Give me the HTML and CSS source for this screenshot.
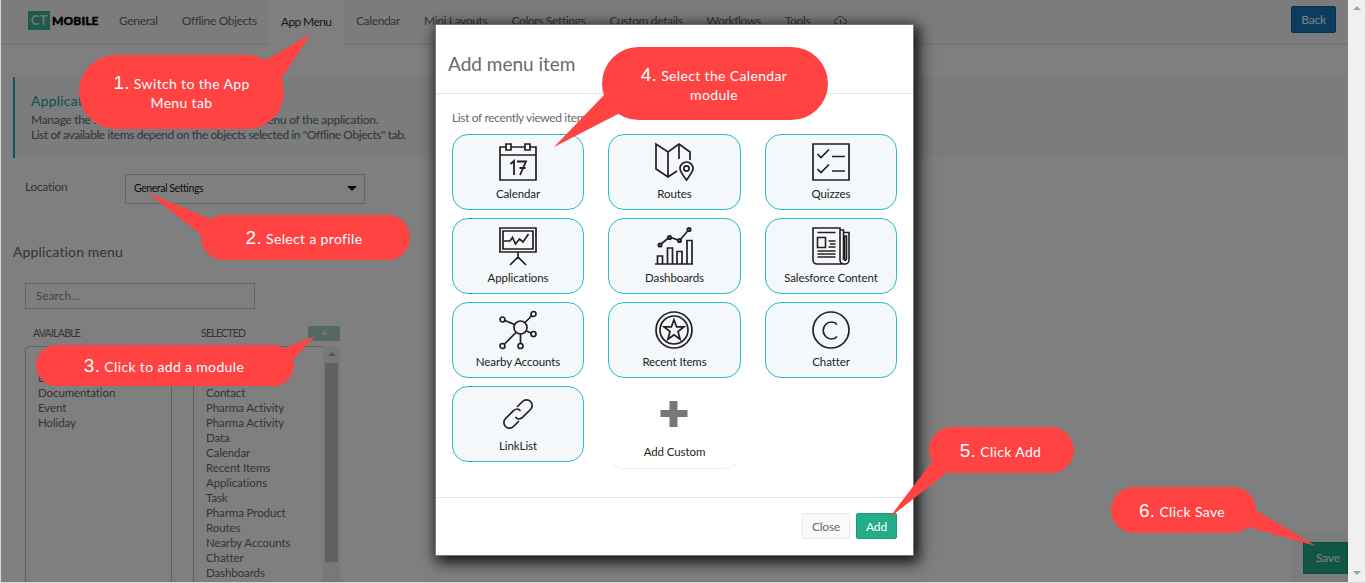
FILE: index.html
```html
<!DOCTYPE html>
<html lang="en">
<head>
<meta charset="utf-8">
<title>CT Mobile - App Menu</title>
<link rel="stylesheet" href="styles.css">
</head>
<body>
<div class="window">
  <div class="page">
    <header class="topbar">
      <div class="logo"><span class="logo-mark">CT</span><span class="logo-name">MOBILE</span></div>
      <nav class="tabs">
        <span class="tab">General</span>
        <span class="tab">Offline Objects</span>
        <span class="tab active">App Menu</span>
        <span class="tab">Calendar</span>
        <span class="tab">Mini Layouts</span>
        <span class="tab">Colors Settings</span>
        <span class="tab">Custom details</span>
        <span class="tab">Workflows</span>
        <span class="tab">Tools</span>
        <span class="tab"><svg width="13" height="12" viewBox="0 0 13 12" fill="none" stroke="currentColor"><path d="M4 9H3a2.500 2.500 0 0 1-.2-5A3.800 3.800 0 0 1 10 4a2.500 2.500 0 0 1 0 5H9M6.500 5v6M4.500 9l2 2 2-2"/></svg></span>
      </nav>
      <span class="back">Back</span>
    </header>
    <section class="notice">
      <h2>Application menu</h2>
      <p class="wide">Manage the set of available items in the main menu of the application.</p>
      <p>List of available items depend on the objects selected in "Offline Objects" tab.</p>
    </section>
    <div class="location">
      <span class="location-label">Location</span>
      <div class="select"><span>General Settings</span><i class="caret"></i></div>
    </div>
    <h3 class="section-title">Application menu</h3>
    <div class="search">Search...</div>
    <div class="lists-head"><span class="col-a">AVAILABLE</span><span class="col-b">SELECTED</span><span class="plus">+</span></div>
    <div class="lists">
      <ul class="list available"><li>Account</li><li>Data</li><li>Documentation</li><li>Event</li><li>Holiday</li></ul>
      <ul class="list selected"><li>Home</li><li>Account</li><li>Contact</li><li>Pharma Activity</li><li>Pharma Activity</li><li>Data</li><li>Calendar</li><li>Recent Items</li><li>Applications</li><li>Task</li><li>Pharma Product</li><li>Routes</li><li>Nearby Accounts</li><li>Chatter</li><li>Dashboards</li></ul>
      <div class="list-scroll"><i class="up"></i><b class="thumb"></b></div>
    </div>
    <div class="savebar"><span class="save">Save</span></div>
    <div class="shade"></div>
  </div>
  <div class="scrollbar"><i class="up"></i><i class="down"></i></div>
</div>

<div class="modal">
  <div class="modal-head">Add menu item</div>
  <div class="modal-body">
    <p class="hint">List of recently viewed items</p>
    <div class="tiles">
      <div class="tile"><svg viewBox="0 0 38 38"><path d="M7 4H1v33h36V4h-6M12 4h14M1 12h36M7 1h5v6H7zM26 1h5v6h-5z"/><path d="M11.500 21l3.500-3v14M18 18.500h9L21 32M20.500 25h6" stroke-width="1.800"/></svg><span>Calendar</span></div>
      <div class="tile"><svg viewBox="0 0 38 38"><path d="M22 28l-9 6L1 26V1l12 8L24 1l11 8v8M13 9v25M24 1v15"/><path d="M31.500 37c-3-4.500-6.500-8-6.500-11.500a6.500 6.500 0 0 1 13 0C38 29 34.500 32.500 31.500 37z"/><circle cx="31.500" cy="25.500" r="2.600"/></svg><span>Routes</span></div>
      <div class="tile"><svg viewBox="0 0 38 38"><path d="M1 1h36v36H1zM5.500 11l3.500 3.500L17 6.500M20 13.500h13M5.500 26l3.500 3.500L17 21.500M20 28h13"/></svg><span>Quizzes</span></div>
      <div class="tile"><svg viewBox="0 0 38 38"><path d="M1 1h36v24H1zM4 4h30v18H4zM5 14h6l2.500-3.500 3 6.500 4-5 3.500 3 5.500-8M19 25v5M11 38l8-8 8 8"/></svg><span>Applications</span></div>
      <div class="tile"><svg viewBox="0 0 38 38"><path d="M0 37h38M2.500 37v-8h5v8M12.500 37V21h5v16M22 37V24.500h5V37M32 37V13.500h5V37M5 18l9.500-8L24.500 13.500l9.500-11"/><g fill="#777"><circle cx="5" cy="18" r="1.700"/><circle cx="14.500" cy="10.500" r="1.700"/><circle cx="24.500" cy="13.500" r="1.700"/><circle cx="34" cy="2.500" r="1.700"/></g></svg><span>Dashboards</span></div>
      <div class="tile"><svg viewBox="0 0 38 38"><path d="M5 37a4 4 0 0 1-4-4V1h27v32a4 4 0 0 0 4 4H5M28 3h3.500v30M28 37h5a4 4 0 0 0 4-4V5.500h-5.500M32.500 9v23q.5 3 2 0V9zM5.500 10.500h8v10h-8zM5.500 5.500h18M16.500 14h7M18 17h5.500M16.500 20h7M5.500 24h18M5.500 27h18M5.500 30h18" stroke-width="1.600"/></svg><span>Salesforce Content</span></div>
      <div class="tile"><svg viewBox="0 0 38 38"><circle cx="21.500" cy="16.500" r="6.500"/><circle cx="3.500" cy="8.500" r="2.500"/><circle cx="34.500" cy="3" r="2.500"/><circle cx="34.500" cy="23" r="2.500"/><circle cx="21.500" cy="35" r="2.500"/><circle cx="3.500" cy="35" r="2.500"/><path d="M6 9.500l9.500 4M32.500 5L26 11.500M32 22l-4.500-2M21.500 23v9.500M5.500 33L17 21.500"/></svg><span>Nearby Accounts</span></div>
      <div class="tile"><svg viewBox="0 0 38 38"><circle cx="19" cy="19" r="18"/><circle cx="19" cy="19" r="14"/><path d="M19 8.800l2.600 7.100h7.300L23 20.500l2.100 7.800-6.100-4.500-6.100 4.500L15 20.500l-5.900-4.600h7.300z"/></svg><span>Recent Items</span></div>
      <div class="tile"><svg viewBox="0 0 38 38"><circle cx="19" cy="19" r="18"/><path d="M25 13.500Q23 11 19.500 11a8.300 8.500 0 0 0 0 17Q23 28 25 25.500"/></svg><span>Chatter</span></div>
      <div class="tile"><svg viewBox="0 0 38 38"><path d="M18 12l5.500-5.500a5.400 5.400 0 0 1 8 8L23.500 22.300q-4 3.500-7-.3M20 26l-5.500 5.500a5.400 5.400 0 0 1-8-8l8-7.800q4-3.500 7 .3"/></svg><span>LinkList</span></div>
      <div class="tile custom"><svg viewBox="0 0 38 38"><path d="M14.500 6h8v9h10v7h-10v10h-8V22h-9v-7h9z"/></svg><span>Add Custom</span></div>
    </div>
  </div>
  <div class="modal-foot"><span class="btn">Close</span><span class="btn add">Add</span></div>
</div>

<svg class="tails" viewBox="0 0 1366 583"><path d="M262 62L311 34 279 82zM213 220L148 193 203 236zM280 350L315 336 289 364zM606 93L554 147 622 112zM934 459L889 518 950 470zM1250 507L1316 546 1244 526z"/></svg>
<div class="callout c1"><p><b>1.</b> Switch to the App</p><p>Menu tab</p></div>
<div class="callout c2"><p><b>2.</b> Select a profile</p></div>
<div class="callout c3"><p><b>3.</b> Click to add a module</p></div>
<div class="callout c4"><p><b>4.</b> Select the Calendar</p><p>module</p></div>
<div class="callout c5"><p><b>5.</b> Click Add</p></div>
<div class="callout c6"><p><b>6.</b> Click Save</p></div>
</body>
</html>
```
FILE: styles.css
```css
* { box-sizing: border-box; }
body { margin: 0; width: 1366px; height: 583px; overflow: hidden; position: relative; font: 12px/15px Lato, sans-serif; color: #676a6c; background: #d8d8d8; }
h2, h3, p, ul { margin: 0; padding: 0; font-weight: 400; list-style: none; }
.window { display: flex; height: 582px; padding: 0 1px; }
.page { position: relative; flex: 1; overflow: hidden; background: #fff; }
.shade { position: absolute; inset: 0; background: rgba(0, 0, 0, .5); }
.scrollbar { position: relative; width: 17px; background: #f0f0f0; }
.up, .down { position: absolute; left: 5px; border: solid transparent; border-width: 0 4px 4px; border-bottom-color: #a3a3a3; top: 6px; }
.down { top: auto; bottom: 7px; border-width: 4px 4px 0; border-top-color: #a3a3a3; }
.topbar { display: flex; height: 45px; background: #f8f8f8; border-bottom: 1px solid #e2e2e2; padding-left: 27px; }
.logo { display: flex; height: 19px; margin-top: 11px; width: 79px; line-height: 19px; }
.logo-mark { width: 22px; background: #41b39d; color: #d9e8e5; font-weight: 700; font-size: 13px; text-align: center; }
.logo-name { margin-left: 2px; color: #000; font-weight: 900; font-size: 12px; letter-spacing: .1px; -webkit-text-stroke: .4px #000; }
.tabs { display: flex; height: 45px; line-height: 42px; letter-spacing: -.35px; }
.tab { padding: 0 12px; white-space: nowrap; }
.tab svg { vertical-align: -2px; }
.tab.active { width: 75px; background: #fff; color: #333; line-height: 44px; letter-spacing: -.6px; }
.back { margin: 6px 12px 0 auto; width: 45px; height: 27px; background: #1a7bbd; border: 1px solid #0e629c; border-radius: 2px; color: #fff; text-align: center; line-height: 26px; letter-spacing: -.2px; }
.notice { margin: 32px 0 0 12px; height: 81px; padding: 15px 0 0 16px; background: #f4f8fa; border-left: 2px solid #20aebb; letter-spacing: -.41px; }
.notice .wide { letter-spacing: -.28px; }
.notice h2 { font-size: 14px; line-height: 18px; color: #20a3af; margin-bottom: 2px; letter-spacing: .2px; }
.location { display: flex; margin: 16px 0 0 24px; height: 30px; line-height: 25px; }
.location-label { width: 100px; letter-spacing: -.3px; }
.select { display: flex; align-items: center; justify-content: space-between; width: 240px; padding: 0 7px 2px 8px; border: 1px solid #c5ccd2; color: #222; font-size: 10.500px; letter-spacing: -.42px; }
.caret { border: 5px solid transparent; border-top-color: #111; border-bottom: 0; }
.section-title { margin: 38px 0 0 12px; font-size: 14px; line-height: 20px; letter-spacing: .15px; }
.search { margin: 21px 0 0 24px; width: 230px; height: 26px; border: 1px solid #c5ccd2; padding-left: 10px; line-height: 24px; font-size: 11.500px; color: #888; letter-spacing: .2px; }
.lists-head { display: flex; margin: 17px 0 5px 24px; width: 315px; height: 15px; font-size: 10.500px; line-height: 15px; letter-spacing: -.75px; }
.col-a { padding-left: 8px; width: 168px; }
.col-b { padding-left: 8px; flex: 1; }
.plus { width: 32px; background: #a4d5c7; color: #fff; text-align: center; }
.lists { display: flex; margin-left: 24px; height: 300px; }
.list { width: 147px; border: 1px solid #c3c3c3; border-radius: 4px 0 0; padding: 8px 0 0 12px; font-size: 11.500px; line-height: 15px; letter-spacing: -.1px; }
.selected { width: 131px; margin-left: 21px; border-right: 0; }
.list-scroll { position: relative; width: 17px; margin-left: -1px; background: #f0f0f0; }
.thumb { display: block; margin: 17px 2px 0; height: 199px; background: #c1c1c1; }
.savebar { position: absolute; right: 0; bottom: 0; width: 57px; height: 52px; padding: 12px 0 0 12px; background: #f8f8f8; }
.save { display: block; height: 32px; padding-left: 12px; background: #23ad88; border: 1px solid #139a75; color: #fff; line-height: 30px; letter-spacing: -.2px; }
.modal { position: absolute; left: 435px; top: 24px; width: 479px; height: 532px; background: #fff; border: 1px solid #777; box-shadow: 3px 4px 14px 2px rgba(0, 0, 0, .9); }
.modal-head { height: 69px; padding: 27px 0 0 12px; border-bottom: 1px solid #e5e5e5; font-size: 19px; line-height: 24px; }
.modal-body { height: 403px; padding: 16px 16px 0; }
.hint { height: 24px; letter-spacing: -.36px; }
.tiles { display: grid; grid-template-columns: 132px 133px 132px; justify-content: space-between; row-gap: 8px; }
.tile { display: flex; flex-direction: column; align-items: center; height: 76px; padding-top: 8px; border: 1px solid #2abcc9; border-radius: 16px; background: #f4f8fb; color: #222; font-size: 11.500px; letter-spacing: -.1px; }
.tile svg { width: 38px; height: 38px; overflow: visible; fill: none; stroke: #231f20; stroke-width: 1.700; }
.tile:nth-child(3n+2) svg { margin-right: 1px; }
.tile span { margin-top: 5px; white-space: nowrap; }
.custom { height: 83px; background: #fff; border-color: transparent; border-bottom-color: #f1f1f1; }
.tile.custom svg { margin-right: 2px; fill: #777; stroke: none; }
.custom span { margin-top: 11px; }
.modal-foot { display: flex; justify-content: flex-end; gap: 6px; height: 58px; padding: 15px 16px 0; border-top: 1px solid #e5e5e5; letter-spacing: -.2px; }
.btn { width: 48px; height: 26px; border: 1px solid #e7eaec; border-radius: 2px; background: #fafafa; text-align: center; line-height: 26px; }
.add { width: 41px; color: #fff; background: #23ad88; border-color: #1c9976; }
.tails { position: absolute; left: 0; top: 0; width: 1366px; height: 583px; fill: #ff4343; }
.callout { position: absolute; display: flex; flex-direction: column; justify-content: center; align-items: center; padding: 2px 2px 0 0; background: #ff4343; color: #fff; font-size: 14px; line-height: 19px; letter-spacing: .35px; white-space: pre; }
.callout b { font: 19px/18px "Liberation Sans", sans-serif; }
.c1 { left: 79px; top: 55px; width: 205px; height: 74px; border-radius: 37px; padding-right: 0; }
.c2 { left: 201px; top: 215px; width: 209px; height: 45px; border-radius: 23px; padding-right: 3px; }
.c3 { left: 36px; top: 345px; width: 258px; height: 41px; border-radius: 21px; }
.c4 { left: 602px; top: 47px; width: 226px; height: 73px; border-radius: 37px; }
.c5 { left: 929px; top: 427px; width: 145px; height: 46px; border-radius: 23px; }
.c6 { left: 1111px; top: 487px; width: 145px; height: 46px; border-radius: 23px; padding-right: 3px; }
```
